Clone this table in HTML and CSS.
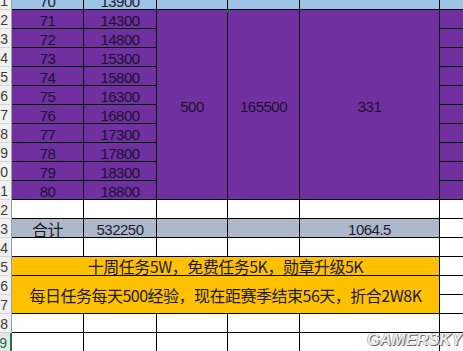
FILE: index.html
```html
<!DOCTYPE html>
<html lang="zh">
<head>
<meta charset="utf-8">
<title>Sheet</title>
<link rel="stylesheet" href="styles.css">
</head>
<body>
<div class="sheet">
  <div class="h">71</div><div class="c blue">70</div><div class="c blue">13900</div><div class="c blue"></div><div class="c blue"></div><div class="c blue"></div><div class="c blue"></div>

  <div class="h">72</div><div class="c pur">71</div><div class="c pur">14300</div><div class="c pur m10">500</div><div class="c pur m10">165500</div><div class="c pur m10">331</div><div class="c pur"></div>
  <div class="h">73</div><div class="c pur">72</div><div class="c pur">14800</div><div class="c pur"></div>
  <div class="h">74</div><div class="c pur">73</div><div class="c pur">15300</div><div class="c pur"></div>
  <div class="h">75</div><div class="c pur">74</div><div class="c pur">15800</div><div class="c pur"></div>
  <div class="h">76</div><div class="c pur">75</div><div class="c pur">16300</div><div class="c pur"></div>
  <div class="h">77</div><div class="c pur">76</div><div class="c pur">16800</div><div class="c pur"></div>
  <div class="h">78</div><div class="c pur">77</div><div class="c pur">17300</div><div class="c pur"></div>
  <div class="h">79</div><div class="c pur">78</div><div class="c pur">17800</div><div class="c pur"></div>
  <div class="h">80</div><div class="c pur">79</div><div class="c pur">18300</div><div class="c pur"></div>
  <div class="h">81</div><div class="c pur">80</div><div class="c pur">18800</div><div class="c pur"></div>

  <div class="h">82</div><div class="c"></div><div class="c"></div><div class="c"></div><div class="c"></div><div class="c"></div><div class="c"></div>

  <div class="h">83</div><div class="c gray zh">合计</div><div class="c gray">532250</div><div class="c gray"></div><div class="c gray"></div><div class="c gray">1064.5</div><div class="c"></div>

  <div class="h">84</div><div class="c"></div><div class="c"></div><div class="c"></div><div class="c"></div><div class="c"></div><div class="c"></div>

  <div class="h">85</div><div class="c orange zh span5">十周任务5W，免费任务5K，勋章升级5K</div><div class="c"></div>
  <div class="h">86</div><div class="c orange zh span5 r2">每日任务每天500经验，现在距赛季结束56天，折合2W8K</div><div class="c"></div>
  <div class="h">87</div><div class="c"></div>

  <div class="h">88</div><div class="c"></div><div class="c"></div><div class="c"></div><div class="c"></div><div class="c"></div><div class="c"></div>
  <div class="h sel">89</div><div class="c"></div><div class="c"></div><div class="c"></div><div class="c"></div><div class="c"></div><div class="c"></div>
</div>
<div class="handle"></div>
<div class="mark">GAMERSKY</div>
</body>
</html>
```

FILE: styles.css
```css
html, body {
  margin: 0;
  padding: 0;
  background: #ffffff;
  overflow: hidden;
}

body {
  position: relative;
  width: 463px;
  height: 351px;
}

.sheet {
  display: grid;
  grid-template-columns: 12px 72px 73px 71px 72px 140px 24px;
  grid-auto-rows: 19px;
  margin-top: -9px;
  font-family: "Liberation Sans", Arial, sans-serif;
}

.h {
  box-sizing: border-box;
  background: #f1f1f1;
  border-right: 1px solid #9e9e9e;
  border-bottom: 1px solid #d6d6d6;
  display: flex;
  justify-content: flex-end;
  align-items: flex-end;
  padding-right: 3px;
  font-size: 14px;
  line-height: 16px;
  color: #3c3c3c;
  overflow: hidden;
}

.h.sel {
  color: #217346;
  border-right: 2px solid #217346;
  background: #e6e6e6;
}

.c {
  box-sizing: border-box;
  background: #ffffff;
  border-right: 1px solid #000000;
  border-bottom: 1px solid #000000;
  display: flex;
  justify-content: center;
  align-items: flex-end;
  font-size: 15px;
  letter-spacing: -0.5px;
  line-height: 15px;
  color: #1f1a33;
  white-space: nowrap;
  overflow: hidden;
}

.blue { background: #9dc3e6; }
.pur { background: #7030a0; color: #1a1230; }
.gray { background: #adb9ca; }
.orange { background: #ffc000; }

.m10 {
  grid-row: span 10;
  align-items: center;
  padding-top: 4px;
}

.zh {
  font-family: "Noto Sans CJK SC", "Liberation Sans", sans-serif;
  font-size: 16px;
  letter-spacing: -0.5px;
  line-height: 16px;
  color: #1a1a1a;
}

.span5 {
  grid-column: span 5;
  align-items: center;
}

.r2 {
  grid-row: span 2;
}

.handle {
  position: absolute;
  left: 227px;
  top: 10px;
  width: 3px;
  height: 3px;
  background: #1f6b3c;
}

.mark {
  position: absolute;
  right: 1px;
  top: 331px;
  font-family: "Liberation Sans", Arial, sans-serif;
  font-weight: bold;
  font-style: italic;
  font-size: 16.5px;
  line-height: 16.5px;
  color: #ececec;
  text-shadow: 1px 1px 0 #6e6e6e, -0.5px -0.5px 0 #9a9a9a;
}
```
